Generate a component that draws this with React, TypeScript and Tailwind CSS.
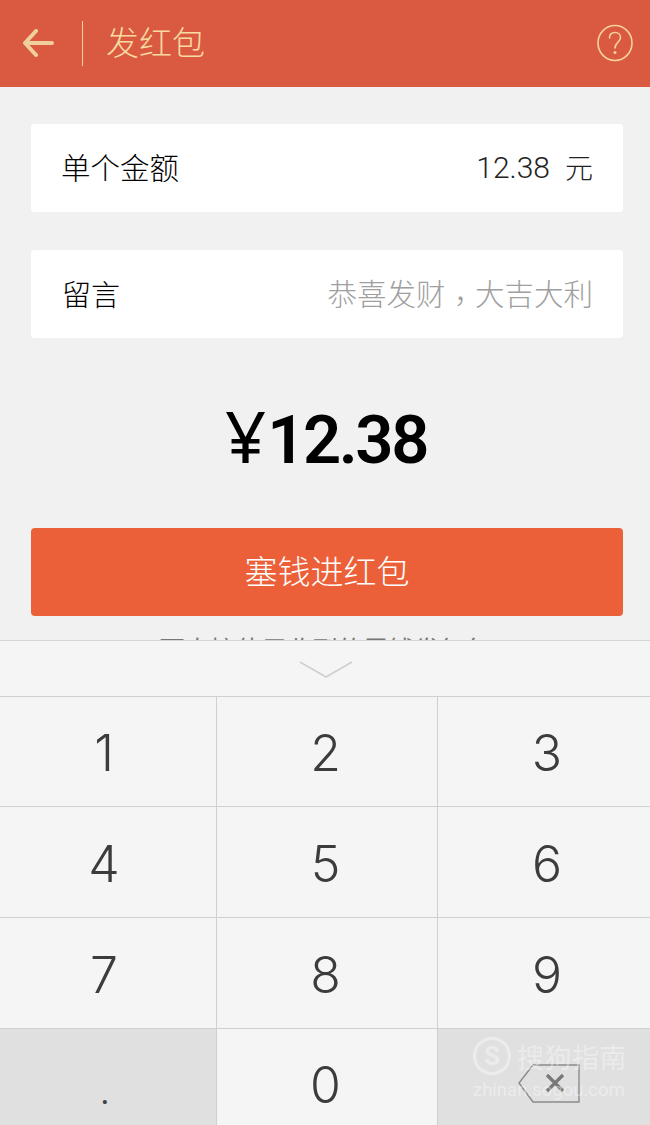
const cjk = "font-['Noto_Sans_CJK_SC',sans-serif]";

function Key({ label, dark, col, children }: { label?: string; dark?: boolean; col: 1 | 2 | 3; children?: React.ReactNode }) {
  const border = col === 1 ? "" : "border-l";
  const shift = col === 1 ? "mr-[8px]" : col === 2 ? "mr-[3px]" : "ml-[6px]";
  return (
    <div className={`flex items-center justify-center border-t border-[#d0d0d0] ${border} ${dark ? "bg-[#e0e0e0]" : "bg-[#f5f5f5]"}`}>
      {label && <span className={`font-['Inter',sans-serif] font-light text-[50px] leading-none text-[#3c3c3c] mt-[3px] ${shift}`}>{label}</span>}
      {children}
    </div>
  );
}

export default function App() {
  return (
    <div className={`relative w-[650px] h-[1125px] overflow-hidden flex flex-col bg-[#f1f1f1] ${cjk}`}>
      <header className="h-[87px] shrink-0 bg-[#d95a40] flex items-center text-[#f8d9a0]">
        <svg width="34" height="30" viewBox="0 0 34 30" fill="none" stroke="#f0cf9c" strokeWidth="4" strokeLinecap="round" strokeLinejoin="round" className="ml-[22px] shrink-0">
          <path d="M14 2 L3 14 L14 26 M4 14 H30" />
        </svg>
        <div className="ml-[26px] w-px h-[45px] bg-[#f5d19b]" />
        <span className="ml-[23px] text-[33px] leading-none font-light -mt-[5px]">发红包</span>
        <svg width="36" height="38" viewBox="0 0 36 38" fill="none" className="ml-auto mr-[17px] -mt-[2px]">
          <ellipse cx="18" cy="19" rx="17" ry="17.5" stroke="#f5d19b" strokeWidth="1.6" />
          <path d="M12.5 14 C12.5 10 15 8.5 18 8.5 C21.5 8.5 23.5 10.8 23.5 13.5 C23.5 18 18 18.5 18 24" stroke="#f5d19b" strokeWidth="1.6" strokeLinecap="round" />
          <circle cx="18" cy="28.5" r="1.5" fill="#f5d19b" />
        </svg>
      </header>

      <main className="h-[553px] shrink-0 overflow-hidden pl-[31px] pr-[27px] pt-[37px]">
        <div className="h-[88px] rounded bg-white flex items-center justify-between pl-[30px] pr-[30px]">
          <span className="text-[29.5px] leading-none font-light text-black -mt-[2px]">单个金额</span>
          <span className="flex items-center gap-[15px] text-[#222] text-[28px] leading-none font-light">
            <span className="font-['Roboto',sans-serif] text-[30px] leading-none">12.38</span>
            <span className="-mt-[2px]">元</span>
          </span>
        </div>
        <div className="mt-[38px] h-[88px] rounded bg-white flex items-center justify-between pl-[31px] pr-[30px]">
          <span className="text-[29px] leading-none font-light text-black -mt-[2px]">留言</span>
          <span className="text-[29.5px] leading-none font-light text-[#a0a0a0] -mt-[2px]">恭喜发财<span className="inline-block translate-y-[7px] font-['Noto_Sans_CJK_TC',sans-serif]">，</span>大吉大利</span>
        </div>
        <div className="h-[190px] flex items-center justify-center text-black">
          <span className="flex items-baseline mt-[7px] leading-none -ml-[2px]">
            <span className="font-['Noto_Sans',sans-serif] font-normal text-[72px] leading-none">¥</span>
            <span className="font-['Roboto',sans-serif] font-semibold text-[67px] leading-none tracking-[-2.5px] ml-[1px]">12.38</span>
          </span>
        </div>
        <div className="h-[88px] rounded bg-[#ec6039] flex items-center justify-center text-white text-[33px] leading-none font-light pb-[4px]">塞钱进红包</div>
        <p className="mt-[14px] text-center text-[25.5px] leading-[36px] text-[#777] -ml-[4px]">可直接使用收到的零钱发红包</p>
      </main>

      <section className="flex-1 overflow-hidden bg-[#f5f5f5] border-t border-[#d5d5d5]">
        <div className="h-[55px] flex items-center justify-center">
          <svg width="54" height="18" viewBox="0 0 54 18" fill="none" stroke="#cfcfcf" strokeWidth="1.6" className="mt-[3px] ml-[2px]">
            <path d="M1 1 L27 16 L53 1" />
          </svg>
        </div>
        <div className="grid grid-cols-[216px_221px_213px] grid-rows-[110px_111px_111px_110px]">
          <Key col={1} label="1" />
          <Key col={2} label="2" />
          <Key col={3} label="3" />
          <Key col={1} label="4" />
          <Key col={2} label="5" />
          <Key col={3} label="6" />
          <Key col={1} label="7" />
          <Key col={2} label="8" />
          <Key col={3} label="9" />
          <Key col={1} dark><span className="font-['Roboto',sans-serif] text-[36px] leading-none text-[#444] mt-[16px] mr-[6px]">.</span></Key>
          <Key col={2} label="0" />
          <Key col={3} dark>
            <svg width="64" height="42" viewBox="0 0 64 42" fill="none" className="mt-[3px] mr-[-10px]">
              <path d="M16 1 H62 V38 H16 L2 19 Z" stroke="#8a8a8a" strokeWidth="1.4" />
              <path d="M30 11 L46 27 M46 11 L30 27" stroke="#777" strokeWidth="3.2" />
            </svg>
          </Key>
        </div>
      </section>

      <div className="absolute left-[473px] top-[1037px] w-[154px] text-white/40">
        <div className="flex items-center gap-[6px]">
          <div className="w-[38px] h-[38px] rounded-full border-[3px] border-white/40 flex items-center justify-center font-['Roboto',sans-serif] font-bold text-[26px] leading-none">S</div>
          <span className="text-[27px] leading-none tracking-[0.5px]">搜狗指南</span>
        </div>
        <div className="font-['Roboto',sans-serif] text-[18.5px] leading-none mt-[6px] whitespace-nowrap">zhinan.sogou.com</div>
      </div>
    </div>
  );
}
